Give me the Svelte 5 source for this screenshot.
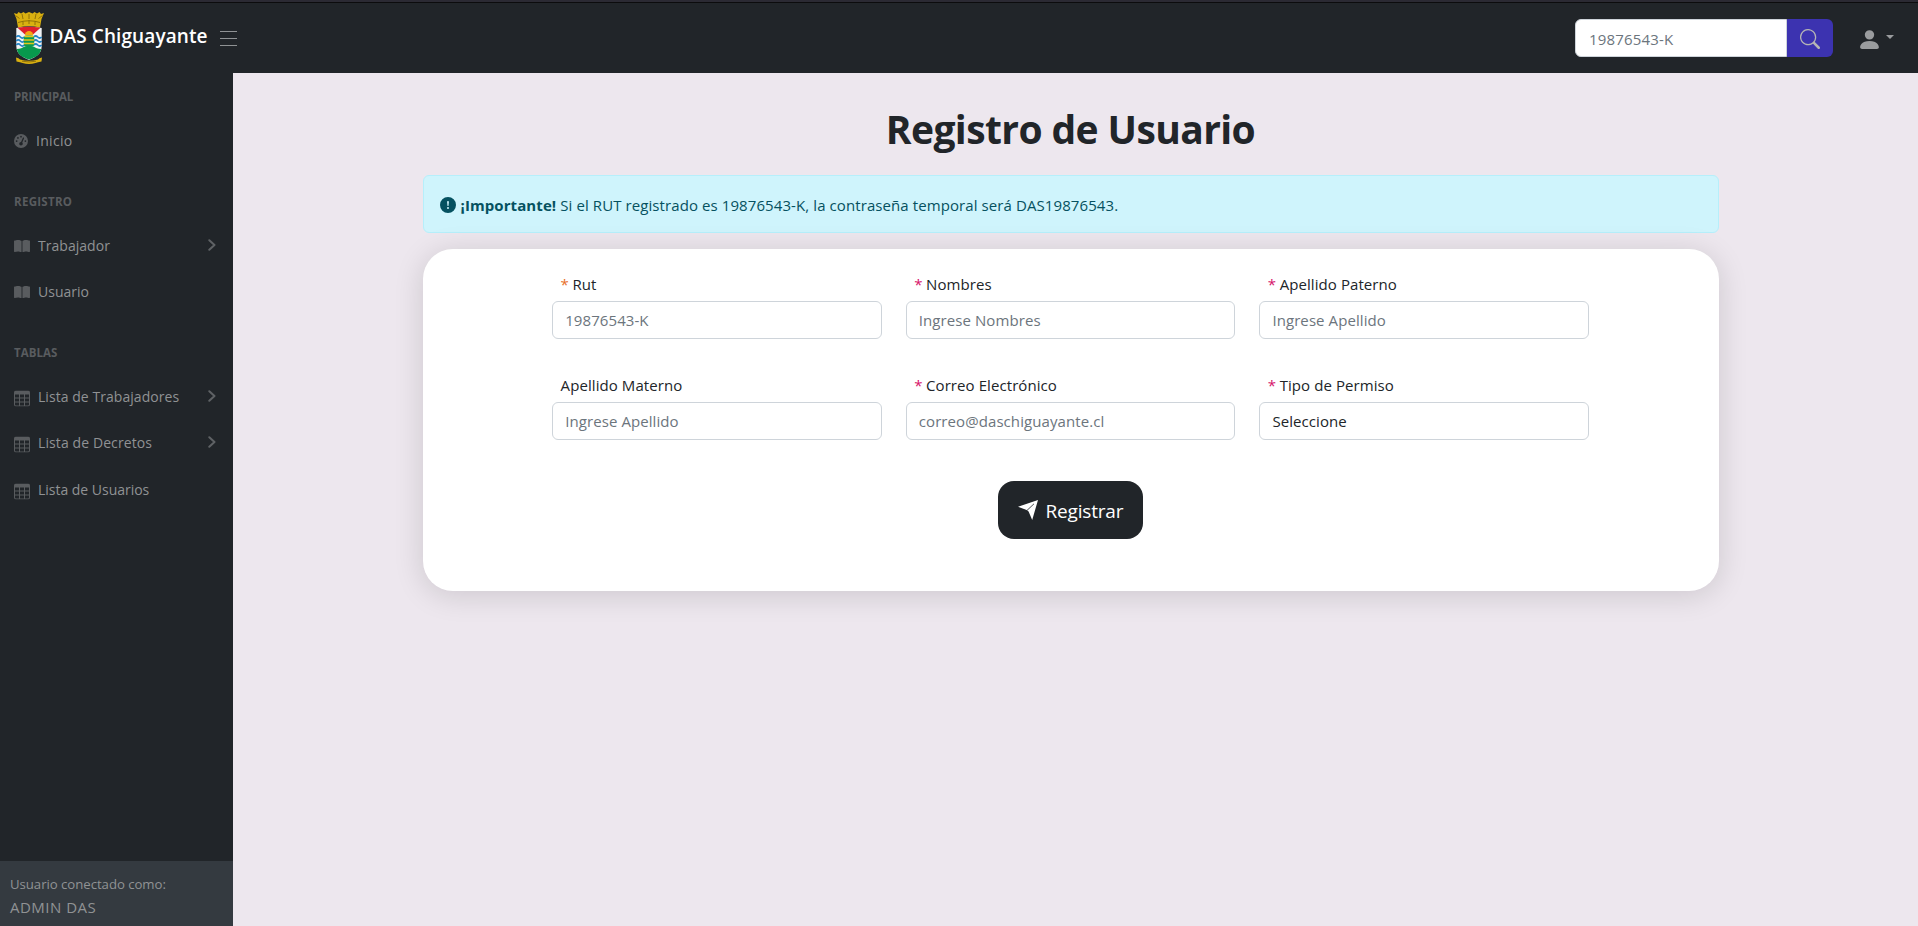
<script>
  const sections = [
    { title: 'PRINCIPAL', track: -0.2, items: [{ label: 'Inicio', icon: 'gauge', track: 0.3 }] },
    {
      title: 'REGISTRO',
      track: 0.3,
      items: [
        { label: 'Trabajador', icon: 'book', more: true, track: 0.03 },
        { label: 'Usuario', icon: 'book', track: 0 }
      ]
    },
    {
      title: 'TABLAS',
      track: 0.05,
      items: [
        { label: 'Lista de Trabajadores', icon: 'table', more: true, track: 0.05 },
        { label: 'Lista de Decretos', icon: 'table', more: true, track: 0.1 },
        { label: 'Lista de Usuarios', icon: 'table', track: -0.02 }
      ]
    }
  ];

  const fields = [
    { id: 'rut', label: 'Rut', hint: '19876543-K', required: true, accent: true },
    { id: 'nombres', label: 'Nombres', hint: 'Ingrese Nombres', required: true },
    { id: 'paterno', label: 'Apellido Paterno', hint: 'Ingrese Apellido', required: true },
    { id: 'materno', label: 'Apellido Materno', hint: 'Ingrese Apellido' },
    { id: 'correo', label: 'Correo Electrónico', hint: 'correo@daschiguayante.cl', required: true },
    { id: 'permiso', label: 'Tipo de Permiso', options: ['Seleccione'], required: true }
  ];
</script>

<div class="app">
  <header>
    <svg class="crest" viewBox="0 0 30 52" width="30" height="52" aria-hidden="true">
      <path d="M0 1l3 1 1.500-2L7 1.500 9.500 0l2 1.500L15 0l3.500 1.500 2-1.500L23 1.500 25.500 0 27 2l3-1-2.500 6-1.500 8.500Q15 12.500 4 15.500L2.500 7z" fill="#d9b010" />
      <path d="M1.500 3.500l4 3M28.500 3.500l-4 3M8 2l1 5M15 2v5M22 2l-1 5M4 10.500q11-3.500 22 0M9 9v4M15 8v4M21 9v4" fill="none" stroke="#8a6b08" stroke-width=".9" />
      <path d="M2.300 16Q15 13.500 27.700 16v18c0 8-6 11-12.700 14-6.700-3-12.700-6-12.700-14z" fill="#f1f3f5" />
      <path d="M3.500 15.800Q15 13.800 26.500 15.800L19 22.500H11z" fill="#df1f2c" />
      <path d="M2.300 25q2-2 4 0t4 0M19.700 25q2-2 4 0t4 0M2.300 29q2-2 4 0t4 0M19.700 29q2-2 4 0t4 0M2.300 33q2-2 4 0t4 0M19.700 33q2-2 4 0t4 0" fill="none" stroke="#2384c5" stroke-width="1.700" />
      <path d="M10.800 23.500a4.200 4.500 0 0 1 8.400 0z" fill="#f3a913" />
      <rect x="9.800" y="23.500" width="10.400" height="11.500" rx="3" fill="#0a9850" />
      <path d="M10.500 24.500h9M9.800 28h10.400M10 31.500h10" stroke="#e0c51c" stroke-width="1.700" />
      <path d="M2.800 37Q8 36.500 10 34.800Q15 33.500 20 34.800Q22 36.500 27.200 37c-1 6-6.200 8.500-12.200 10.500-6-2-11.200-4.500-12.200-10.500z" fill="#08994d" />
      <path d="M2 45.500q3 .5 4 2 9 2.500 18 0 1-1.500 4-2l-.5 4q-4 .5-6 1.500-6.500 2-13 0-2-1-6-1.500z" fill="#d9b010" />
      <path d="M8 49.200q7 1.500 14 0" fill="none" stroke="#806409" stroke-width=".8" />
    </svg>
    <span class="brand">DAS Chiguayante</span>
    <button class="burger" aria-label="Menú"><i></i><i></i><i></i></button>

    <div class="search">
      <input type="text" placeholder="19876543-K" aria-label="Buscar" />
      <button aria-label="Buscar">
        <svg viewBox="0 0 16 16" width="20" height="20" fill="currentColor"><path d="M11.742 10.344a6.500 6.500 0 1 0-1.397 1.398h-.001c.03.04.062.078.098.115l3.850 3.850a1 1 0 0 0 1.415-1.414l-3.850-3.850a1.007 1.007 0 0 0-.115-.1zM12 6.500a5.500 5.500 0 1 1-11 0 5.500 5.500 0 0 1 11 0z" /></svg>
      </button>
    </div>
    <button class="account" aria-label="Cuenta">
      <svg viewBox="0 0 16 16" width="25" height="25" fill="currentColor"><path d="M3 14s-1 0-1-1 1-4 6-4 6 3 6 4-1 1-1 1H3Zm5-6a3 3 0 1 0 0-6 3 3 0 0 0 0 6Z" /></svg>
      <i class="caret"></i>
    </button>
  </header>

  <div class="body">
    <aside>
      <nav>
        {#each sections as section}
          <h2 style:letter-spacing="{section.track}px">{section.title}</h2>
          {#each section.items as item}
            <a href="#top" class={item.icon}>
              {#if item.icon === 'gauge'}
                <svg viewBox="0 0 512 512" width="14" height="14"><path fill-rule="evenodd" d="M0 256a256 256 0 1 1 512 0A256 256 0 1 1 0 256zM288 96a32 32 0 1 0-64 0 32 32 0 1 0 64 0zM256 416c35.300 0 64-28.700 64-64c0-17.400-6.900-33.100-18.100-44.600L366 161.700c5.300-12.100-.2-26.300-12.300-31.600s-26.300 .2-31.600 12.300L257.900 288c-.6 0-1.300 0-1.900 0c-35.300 0-64 28.700-64 64s28.700 64 64 64zM176 144a32 32 0 1 0-64 0 32 32 0 1 0 64 0zM96 288a32 32 0 1 0 0-64 32 32 0 1 0 0 64zm352-32a32 32 0 1 0-64 0 32 32 0 1 0 64 0z" /></svg>
              {:else if item.icon === 'book'}
                <svg viewBox="0 0 576 512" width="16" height="14.200"><path d="M249.600 471.500c10.800 3.800 22.400-4.100 22.400-15.500V78.600c0-4.200-1.600-8.400-5-11C247.400 52 202.400 32 144 32C93.500 32 46.300 45.300 18.100 56.100C6.800 60.500 0 71.700 0 83.800V454.100c0 11.900 12.800 20.200 24.100 16.500C55.600 460.100 105.500 448 144 448c33.900 0 79 14 105.600 23.500zm76.800 0C353 462 398.100 448 432 448c38.500 0 88.400 12.100 119.900 22.600c11.300 3.800 24.100-4.600 24.100-16.500V83.800c0-12.100-6.800-23.300-18.100-27.600C529.700 45.300 482.500 32 432 32c-58.400 0-103.400 20-123 35.600c-3.300 2.600-5 6.800-5 11V456c0 11.400 11.700 19.300 22.400 15.500z" /></svg>
              {:else}
                <svg viewBox="0 0 16 16" width="16" height="16"><path d="M0 2a2 2 0 0 1 2-2h12a2 2 0 0 1 2 2v12a2 2 0 0 1-2 2H2a2 2 0 0 1-2-2V2zm15 2h-4v3h4V4zm0 4h-4v3h4V8zm0 4h-4v3h3a1 1 0 0 0 1-1v-2zm-5 3v-3H6v3h4zm-5 0v-3H1v2a1 1 0 0 0 1 1h3zm-4-4h4V8H1v3zm0-4h4V4H1v3zm5-3v3h4V4H6zm4 4H6v3h4V8z" /></svg>
              {/if}
              <span style:letter-spacing="{item.track}px">{item.label}</span>
              {#if item.more}
                <svg class="chevron" viewBox="0 0 8 12" width="8" height="12"><path d="M1.300 1.200L6.500 6l-5.200 4.800" /></svg>
              {/if}
            </a>
          {/each}
        {/each}
      </nav>
      <div class="session">
        <small>Usuario conectado como:</small>
        <span>ADMIN DAS</span>
      </div>
    </aside>

    <main>
      <div class="content">
        <h1>Registro de Usuario</h1>
        <div class="alert">
          <svg viewBox="0 0 16 16" width="16" height="16" fill="currentColor"><path d="M16 8A8 8 0 1 1 0 8a8 8 0 0 1 16 0zM8 4a.905.905 0 0 0-.9.995l.35 3.507a.552.552 0 0 0 1.100 0l.35-3.507A.905.905 0 0 0 8 4zm.002 6a1 1 0 1 0 0 2 1 1 0 0 0 0-2z" /></svg>
          <p><strong>¡Importante!</strong> Si el RUT registrado es 19876543-K, la contraseña temporal será DAS19876543.</p>
        </div>
        <form class="card">
          <div class="grid">
            {#each fields as field}
              <div class="field">
                <label for={field.id}>{#if field.required}<span class="star" class:accent={field.accent}>*</span>{/if}{field.label}</label>
                {#if field.options}
                  <select id={field.id}>
                    {#each field.options as option}<option>{option}</option>{/each}
                  </select>
                {:else}
                  <input id={field.id} type="text" placeholder={field.hint} />
                {/if}
              </div>
            {/each}
          </div>
          <button class="submit" type="button">
            <svg viewBox="0 0 20 20" width="20" height="20"><path d="M0 6.700L20 0l-5.800 20-3.600-8.500L8.600 9.900z" fill="#fff" /><path d="M8.800 10.600L16 3.800" stroke="#212529" stroke-width=".8" /></svg>
            <span>Registrar</span>
          </button>
        </form>
      </div>
    </main>
  </div>
</div>

<style>
  :global(body) {
    margin: 0;
  }
  .app,
  .app * {
    box-sizing: border-box;
  }
  .app {
    height: 926px;
    display: flex;
    flex-direction: column;
    overflow: hidden;
    font-family: 'Open Sans', 'Noto Sans', sans-serif;
    font-size: 15px;
    line-height: 24px;
    letter-spacing: 0.08px;
    color: #212529;
    background: #ede7ee;
  }
  button,
  input,
  select {
    font: inherit;
    letter-spacing: inherit;
    color: inherit;
    margin: 0;
  }
  button {
    border: 0;
    background: none;
    padding: 0;
  }
  svg {
    display: block;
    flex: none;
  }

  header {
    flex: none;
    height: 73px;
    display: flex;
    align-items: flex-start;
    padding: 9px 24px 0 14px;
    background: #212529;
    border-top: 3px solid #0c0c0d;
    position: relative;
  }
  header::before {
    content: '';
    position: absolute;
    left: 0;
    right: 0;
    top: -3px;
    height: 2px;
    background: #2b2a33;
  }
  .brand {
    margin: 9px 0 0 5.500px;
    font-size: 19px;
    font-weight: 600;
    line-height: 30px;
    letter-spacing: 0.1px;
    color: #fff;
  }
  .burger {
    margin: 19px 0 0 12.500px;
    width: 17px;
    display: grid;
    gap: 5.500px;
  }
  .burger i {
    height: 1.300px;
    background: #8f9294;
  }
  .search {
    margin: 7px 0 0 auto;
    display: flex;
  }
  .search input {
    width: 212px;
    padding: 1px 13px 0;
    border-radius: 6px 0 0 6px;
    letter-spacing: 0.17px;
  }
  .search button {
    width: 46px;
    height: 38px;
    padding-top: 2px;
    display: grid;
    place-items: center;
    border-radius: 0 6px 6px 0;
    background: #3c33b0;
    color: #b5b5b5;
  }
  .account {
    display: flex;
    margin: 15px 0 0 24px;
    color: #9a9c9e;
  }
  .caret {
    margin: 8px 0 0 4px;
    border: 4px solid transparent;
    border-top-color: currentColor;
    border-bottom: 0;
    height: 0;
  }

  .body {
    flex: 1;
    display: flex;
    min-height: 0;
  }
  aside {
    flex: none;
    width: 233px;
    display: flex;
    flex-direction: column;
    justify-content: space-between;
    background: #212529;
  }
  nav {
    padding-top: 15px;
  }
  h2 {
    margin: 0;
    padding: 28px 0 12px 14px;
    font-size: 11.500px;
    line-height: 18px;
    font-weight: 700;
    color: #595c5f;
  }
  h2:first-child {
    padding-top: 0;
  }
  a {
    display: flex;
    align-items: center;
    padding: 12px 17px 12px 14px;
    font-size: 14px;
    line-height: 22.500px;
    color: #909294;
    text-decoration: none;
  }
  a svg {
    fill: #595c5f;
    margin-right: 8px;
  }
  .table svg:first-child {
    transform: translateY(1.500px);
  }
  a .chevron {
    margin: -2px 0 0 auto;
    fill: none;
    stroke: #5f6265;
    stroke-width: 2;
    stroke-linecap: round;
    stroke-linejoin: round;
  }
  .session {
    height: 65px;
    padding: 13px 10px 0;
    display: grid;
    align-content: start;
    background: #343a40;
    color: #909294;
  }
  .session small {
    font-size: 13.200px;
    line-height: 21px;
    letter-spacing: -0.04px;
  }
  .session span {
    letter-spacing: 0.5px;
  }

  main {
    flex: 1;
    padding: 32px 9px 0 0;
  }
  .content {
    width: 1296px;
    margin: 0 auto;
  }
  h1 {
    margin: 0 0 22px;
    padding-right: 1px;
    font-size: 39px;
    line-height: 48px;
    font-weight: 700;
    letter-spacing: -0.6px;
    text-align: center;
  }
  .alert {
    height: 58px;
    margin-bottom: 16px;
    padding: 0 16px;
    display: flex;
    align-items: center;
    gap: 4.500px;
    border: 1px solid #b6effb;
    border-radius: 6px;
    background: #cff4fc;
    color: #055160;
  }
  .alert svg {
    margin-top: 2px;
  }
  .alert p {
    margin: 0;
    padding-top: 2px;
    letter-spacing: 0.09px;
  }
  .card {
    height: 342px;
    padding: 23px 130px 0 129.200px;
    display: flex;
    flex-direction: column;
    align-items: center;
    border-radius: 30px;
    background: #fff;
    box-shadow: 0 4px 30px rgba(0, 0, 0, 0.14);
  }
  .grid {
    width: 100%;
    display: grid;
    grid-template-columns: repeat(3, 1fr);
    gap: 34px 24px;
  }
  .field {
    display: grid;
    gap: 5px;
  }
  label {
    padding-left: 8.400px;
  }
  .star {
    margin-right: 3.500px;
    color: #d6136a;
  }
  .star.accent {
    color: #e8702a;
  }
  input,
  select {
    display: block;
    width: 100%;
    height: 38px;
    padding: 0 12px;
    appearance: none;
    border: 1px solid #ced4da;
    border-radius: 6px;
    background: #fff;
    outline: 0;
  }
  input::placeholder {
    color: #6c757d;
    opacity: 1;
  }
  .submit {
    width: 145px;
    height: 58px;
    margin: 41px 1px 0 0;
    padding: 0 20px;
    display: flex;
    align-items: center;
    gap: 8px;
    border-radius: 16px;
    background: #212529;
    color: #fff;
    font-size: 19px;
    letter-spacing: -0.2px;
  }
  .submit span {
    padding-top: 1px;
  }
</style>
